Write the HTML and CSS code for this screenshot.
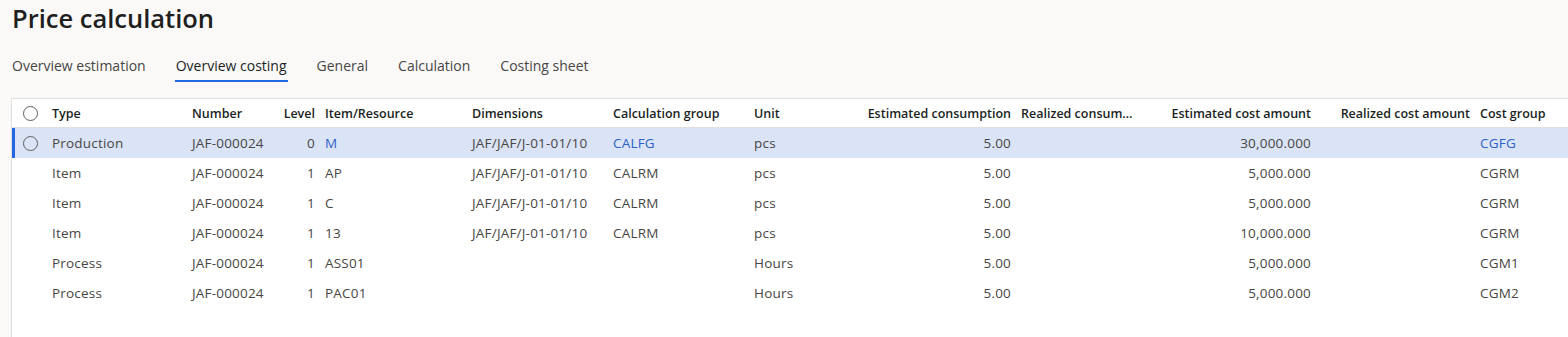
FILE: index.html
```html
<!DOCTYPE html>
<html lang="en">
<head>
  <!-- Meta and title -->
  <meta charset="UTF-8">
  <meta name="viewport" content="width=device-width, initial-scale=1">
  <title>Price calculation</title>
  <link rel="stylesheet" href="styles.css">
</head>
<body>

  <!-- Page title -->
  <h1 class="page-title">Price calculation</h1>

  <!-- Tabs -->
  <div class="tabs">
    <span class="tab">Overview estimation</span>
    <span class="tab active">Overview costing</span>
    <span class="tab">General</span>
    <span class="tab">Calculation</span>
    <span class="tab">Costing sheet</span>
  </div>

  <!-- Grid -->
  <div class="grid-wrap">
    <table class="grid">
      <colgroup>
        <col style="width: 35px">
        <col style="width: 140px">
        <col style="width: 83px">
        <col style="width: 50px">
        <col style="width: 147px">
        <col style="width: 141px">
        <col style="width: 141px">
        <col style="width: 101px">
        <col style="width: 166px">
        <col style="width: 129px">
        <col style="width: 171px">
        <col style="width: 159px">
        <col>
      </colgroup>
      <thead>
        <tr>
          <th class="check"><span class="radio"></span></th>
          <th>Type</th>
          <th>Number</th>
          <th class="num">Level</th>
          <th>Item/Resource</th>
          <th>Dimensions</th>
          <th>Calculation group</th>
          <th>Unit</th>
          <th class="num">Estimated consumption</th>
          <th>Realized consumption</th>
          <th class="num">Estimated cost amount</th>
          <th class="num">Realized cost amount</th>
          <th>Cost group</th>
        </tr>
      </thead>
      <tbody>
        <tr class="selected">
          <td class="check"><span class="radio"></span></td>
          <td>Production</td>
          <td>JAF-000024</td>
          <td class="num">0</td>
          <td class="link">M</td>
          <td>JAF/JAF/J-01-01/10</td>
          <td class="link">CALFG</td>
          <td>pcs</td>
          <td class="num">5.00</td>
          <td></td>
          <td class="num">30,000.000</td>
          <td></td>
          <td class="link">CGFG</td>
        </tr>
        <tr>
          <td class="check"></td>
          <td>Item</td>
          <td>JAF-000024</td>
          <td class="num">1</td>
          <td>AP</td>
          <td>JAF/JAF/J-01-01/10</td>
          <td>CALRM</td>
          <td>pcs</td>
          <td class="num">5.00</td>
          <td></td>
          <td class="num">5,000.000</td>
          <td></td>
          <td>CGRM</td>
        </tr>
        <tr>
          <td class="check"></td>
          <td>Item</td>
          <td>JAF-000024</td>
          <td class="num">1</td>
          <td>C</td>
          <td>JAF/JAF/J-01-01/10</td>
          <td>CALRM</td>
          <td>pcs</td>
          <td class="num">5.00</td>
          <td></td>
          <td class="num">5,000.000</td>
          <td></td>
          <td>CGRM</td>
        </tr>
        <tr>
          <td class="check"></td>
          <td>Item</td>
          <td>JAF-000024</td>
          <td class="num">1</td>
          <td>13</td>
          <td>JAF/JAF/J-01-01/10</td>
          <td>CALRM</td>
          <td>pcs</td>
          <td class="num">5.00</td>
          <td></td>
          <td class="num">10,000.000</td>
          <td></td>
          <td>CGRM</td>
        </tr>
        <tr>
          <td class="check"></td>
          <td>Process</td>
          <td>JAF-000024</td>
          <td class="num">1</td>
          <td>ASS01</td>
          <td></td>
          <td></td>
          <td>Hours</td>
          <td class="num">5.00</td>
          <td></td>
          <td class="num">5,000.000</td>
          <td></td>
          <td>CGM1</td>
        </tr>
        <tr>
          <td class="check"></td>
          <td>Process</td>
          <td>JAF-000024</td>
          <td class="num">1</td>
          <td>PAC01</td>
          <td></td>
          <td></td>
          <td>Hours</td>
          <td class="num">5.00</td>
          <td></td>
          <td class="num">5,000.000</td>
          <td></td>
          <td>CGM2</td>
        </tr>
      </tbody>
    </table>
  </div>

</body>
</html>
```

FILE: styles.css
```css
/* Page */
body {
  font-family: 'Open Sans', 'Noto Sans', sans-serif;
  margin: 0;
  padding: 0;
  background-color: #faf9f8;
  color: #323130;
  height: 100vh;
  display: flex;
  flex-direction: column;
  overflow: hidden;
}

/* Title */
.page-title {
  margin: 1px 0 0 12px;
  font-size: 25.5px;
  font-weight: 600;
  line-height: 34px;
  color: #201f1e;
}

/* Tabs */
.tabs {
  display: flex;
  gap: 28px;
  margin: 21px 0 0 11px;
}

.tab {
  font-size: 14px;
  line-height: 20px;
  padding: 0 1px 4px;
  color: #484644;
  border-bottom: 2px solid transparent;
}

.tab.active {
  color: #201f1e;
  border-bottom-color: #2266e3;
}

/* Grid */
.grid-wrap {
  flex: 1;
  margin: 16px 0 0 11px;
  background-color: #fff;
  border-left: 1px solid #e1dfdd;
  border-top: 1px solid #e1dfdd;
}

.grid {
  border-collapse: collapse;
  table-layout: fixed;
  width: 1568px;
  font-size: 13.5px;
  letter-spacing: 0.2px;
}

.grid th,
.grid td {
  padding: 0 5px;
  text-align: left;
  white-space: nowrap;
  overflow: hidden;
  text-overflow: ellipsis;
}

.grid th {
  height: 28px;
  font-weight: 600;
  font-size: 12.5px;
  letter-spacing: 0;
  color: #201f1e;
  border-bottom: 1px solid #e1dfdd;
}

.grid td {
  height: 30px;
  color: #484644;
}

.grid .num {
  text-align: right;
}

.grid .check {
  padding: 0 0 0 11px;
}

.grid td.link {
  color: #2c62c5;
}

.grid tr.selected td {
  background-color: #dbe4f7;
}

.grid tr.selected td.check {
  box-shadow: inset 3px 0 0 #2266e3;
}

/* Radio circle */
.radio {
  display: block;
  width: 13px;
  height: 13px;
  border: 1px solid #605e5c;
  border-radius: 50%;
}
```
